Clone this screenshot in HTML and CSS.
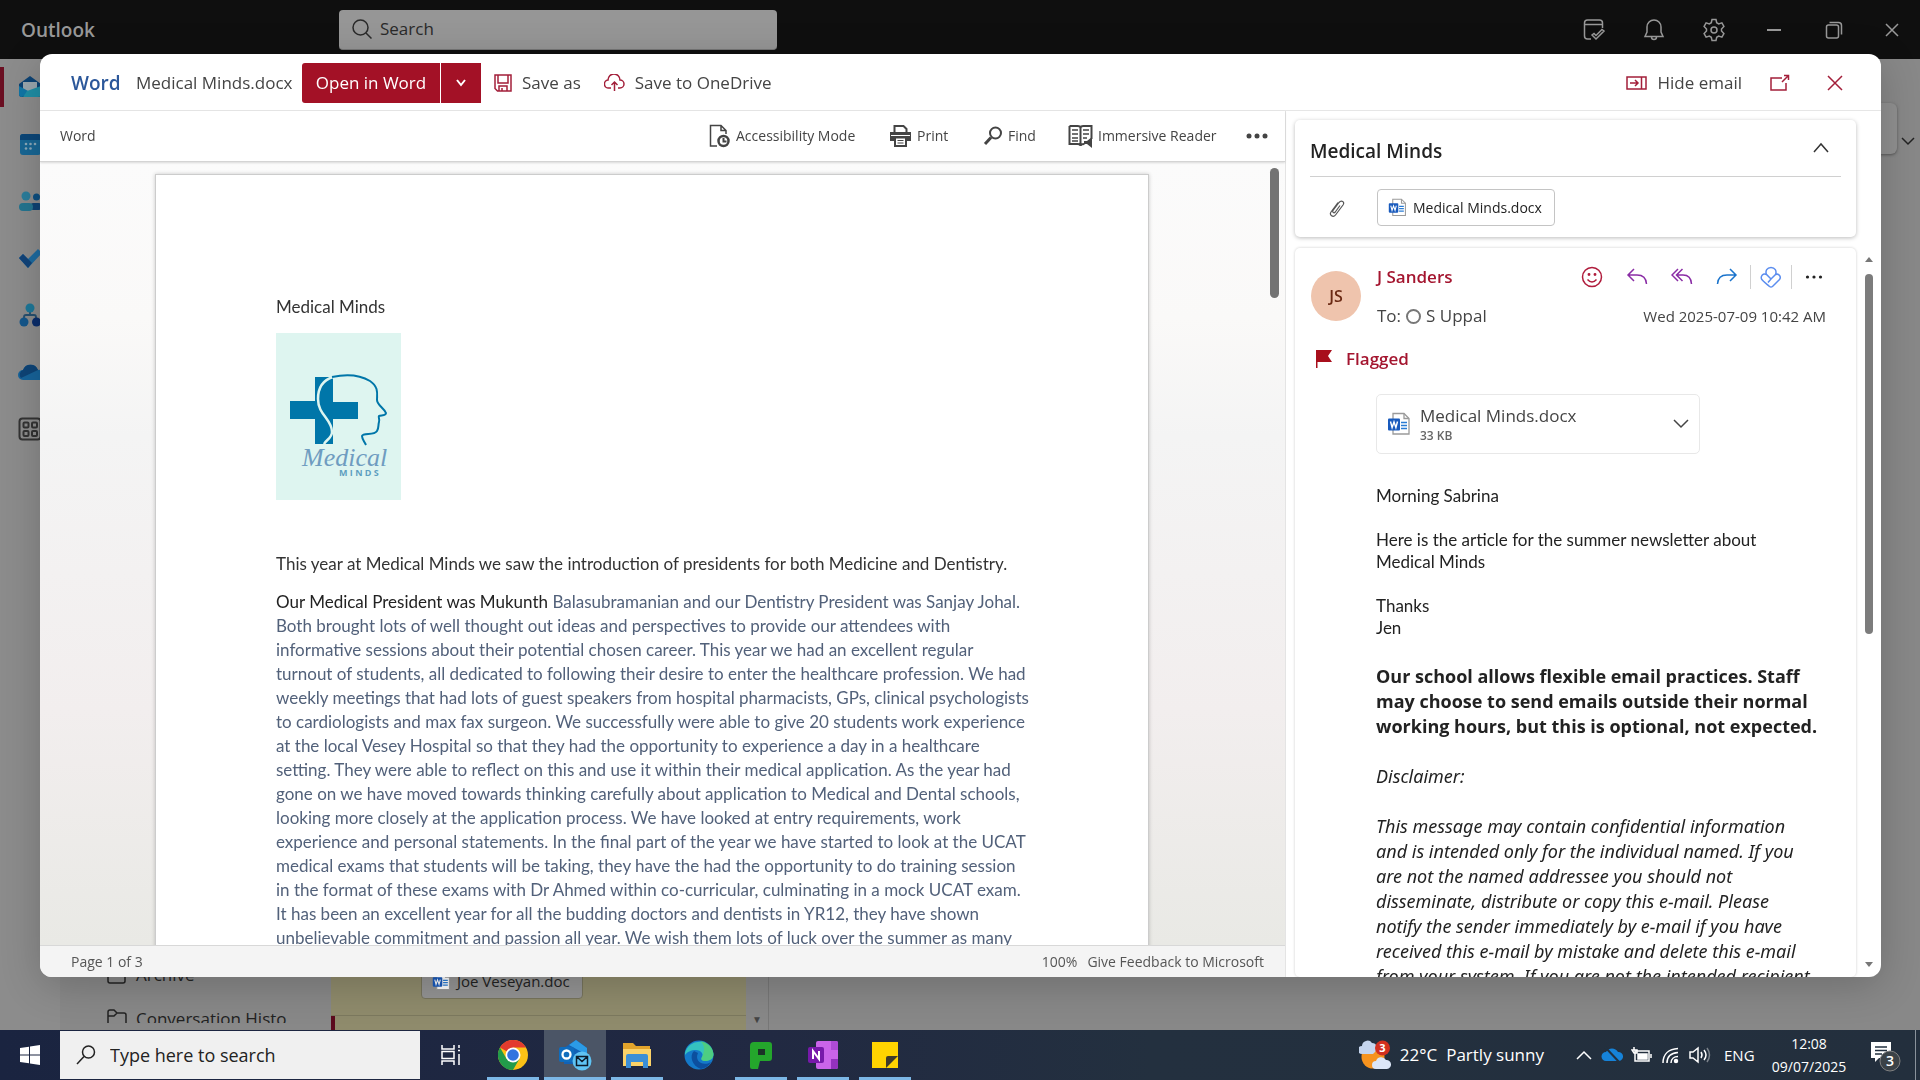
FILE: index.html
```html
<!DOCTYPE html>
<html lang="en">
<head>
<meta charset="utf-8">
<title>Outlook</title>
<link rel="stylesheet" href="styles.css">
</head>
<body>
<svg width="0" height="0" class="defs" aria-hidden="true">
  <symbol id="word-file" viewBox="0 0 24 24">
    <path d="M6 1.5h11l5 5v15.500H6z" fill="#fff" stroke="#9a9a9a" stroke-width="1.300"/>
    <path d="M17 1.500v5h5" fill="none" stroke="#9a9a9a" stroke-width="1.300"/>
    <path d="M14 10.500h6M14 13.500h6M14 16.500h6" stroke="#2b7cd3" stroke-width="1.500"/>
    <rect x="1" y="6.500" width="12" height="12" rx="1" fill="#185abd"/>
    <path d="M3.500 9.500l1.600 6 1.900-5.500 1.900 5.500 1.600-6" fill="none" stroke="#fff" stroke-width="1.400"/>
  </symbol>
</svg>

<header class="titlebar">
  <span class="app-name">Outlook</span>
  <label class="top-search">
    <svg class="ico" width="22" height="22" viewBox="0 0 22 22"><circle cx="9.500" cy="9.500" r="7.500"/><path d="M15 15l5.500 5.500"/></svg>
    <input type="text" placeholder="Search" aria-label="Search">
  </label>
  <nav class="window-tools">
    <button aria-label="My Day"><svg class="ico" width="24" height="24" viewBox="0 0 24 24"><path d="M9 21H5.500A3 3 0 0 1 2.500 18V5a3 3 0 0 1 3-3h12a3 3 0 0 1 3 3v5M2.500 6.500h18M10 17l4 4 8-8-2-1.500-6 6-2-2z"/></svg></button>
    <button aria-label="Notifications"><svg class="ico" width="24" height="24" viewBox="0 0 24 24"><path d="M12 2a7 7 0 0 0-7 7v5l-2 4.500h18L19 14V9a7 7 0 0 0-7-7zM9.500 19a2.500 2.500 0 0 0 5 0"/></svg></button>
    <button aria-label="Settings"><svg class="ico" width="24" height="24" viewBox="0 0 24 24"><circle cx="12" cy="12" r="3"/><path d="M10 1.500h4l.7 3.200 2 1.200 3.200-1 2 3.500L19.500 11v2l2.400 2.600-2 3.500-3.200-1-2 1.200-.7 3.200h-4l-.7-3.200-2-1.200-3.200 1-2-3.500L4.500 13v-2L2.100 8.400l2-3.500 3.200 1 2-1.200z"/></svg></button>
    <button aria-label="Minimize"><svg class="ico" width="18" height="18" viewBox="0 0 18 18"><path d="M2 9h14" stroke-width="2"/></svg></button>
    <button aria-label="Restore"><svg class="ico" width="18" height="18" viewBox="0 0 18 18"><rect x="1.500" y="4" width="12" height="13" rx="2"/><path d="M4.500 1.500h9a3 3 0 0 1 3 3v9"/></svg></button>
    <button aria-label="Close window"><svg class="ico" width="16" height="16" viewBox="0 0 16 16"><path d="M2 2l12 12M14 2L2 14"/></svg></button>
  </nav>
</header>

<main class="app">
  <nav class="rail">
    <button class="current" aria-label="Mail"><svg width="24" height="24" viewBox="0 0 24 24"><path d="M1 9l11-8 11 8v10a3 3 0 0 1-3 3H4a3 3 0 0 1-3-3z" fill="#0d4374"/><path d="M5 7h14v9H5z" fill="#9aa6ad"/><path d="M1 11l11 6-8 5a3 3 0 0 1-3-3z" fill="#1076a6"/><path d="M23 11v8a3 3 0 0 1-3 3H5l4-6z" fill="#1f8ea5"/></svg></button>
    <button aria-label="Calendar"><svg width="24" height="24" viewBox="0 0 24 24"><rect x="2" y="2" width="21" height="21" rx="3" fill="#186795"/><path d="M5 2h15a3 3 0 0 1 3 3v3H2V5a3 3 0 0 1 3-3z" fill="#0b4678"/><g fill="#8aa9ba"><circle cx="8" cy="12" r="1.300"/><circle cx="12.500" cy="12" r="1.300"/><circle cx="17" cy="12" r="1.300"/><circle cx="8" cy="16.500" r="1.300"/><circle cx="12.500" cy="16.500" r="1.300"/></g></svg></button>
    <button aria-label="People"><svg width="24" height="24" viewBox="0 0 24 24"><circle cx="8" cy="7" r="4.500" fill="#2a7d9b"/><circle cx="18.500" cy="8" r="3.500" fill="#0e4f80"/><rect x="12" y="14" width="12" height="7" rx="3.500" fill="#0e4374"/><rect x="1" y="14" width="14" height="8" rx="4" fill="#247590"/></svg></button>
    <button aria-label="To Do"><svg width="24" height="24" viewBox="0 0 24 24"><path d="M1 12l4-4 5 5L20 3l4 4-14 15z" fill="#1d6ba0"/><path d="M1 12l4-4 9 9-4 5z" fill="#114379"/></svg></button>
    <button aria-label="Org Explorer"><svg width="24" height="24" viewBox="0 0 24 24"><path d="M12 6v6M6 18v-4a2 2 0 0 1 2-2h8a2 2 0 0 1 2 2v4" fill="none" stroke="#27506f" stroke-width="1.800"/><circle cx="12" cy="5" r="4.500" fill="#1d7798"/><circle cx="6" cy="19" r="4.500" fill="#14578b"/><circle cx="18.500" cy="19" r="4.500" fill="#0a2d6b"/></svg></button>
    <button aria-label="OneDrive"><svg width="24" height="24" viewBox="0 0 24 24"><path d="M5 20a5 5 0 0 1 0-10 8 8 0 0 1 15 0 5 5 0 0 1 3 10z" fill="#17649b"/><path d="M5 10a8 8 0 0 1 15 0L3 18a5 5 0 0 1 2-8z" fill="#0e4477"/></svg></button>
    <button aria-label="More apps"><svg class="ico apps" width="24" height="24" viewBox="0 0 24 24"><rect x="1.500" y="1.500" width="21" height="21" rx="3"/><rect x="5.500" y="5.500" width="5" height="5" rx="1"/><rect x="14" y="5.500" width="5" height="5" rx="1"/><rect x="5.500" y="14" width="5" height="5" rx="1"/><rect x="14" y="14" width="5" height="5" rx="1"/></svg></button>
  </nav>
  <section class="folders">
    <div class="folder"><svg class="ico" width="22" height="20" viewBox="0 0 22 20"><path d="M2 5v11a2 2 0 0 0 2 2h13a2 2 0 0 0 2-2V5M1 2h19v3H1z"/></svg>Archive</div>
    <div class="folder"><svg class="ico" width="22" height="20" viewBox="0 0 22 20"><path d="M2 18V4a2 2 0 0 1 2-2h4l3 3h7a2 2 0 0 1 2 2v11zM2 8h6l3-3"/></svg>Conversation Histo</div>
  </section>
  <section class="messages">
    <div class="message"><span class="doc-chip"><svg width="19" height="19"><use href="#word-file"/></svg>Joe Veseyan.doc</span></div>
    <div class="message next"></div>
  </section>
  <div class="list-scroll">▼</div>
  <section class="reading">
    <div class="ribbon-end"></div>
    <svg class="ico" width="14" height="10" viewBox="0 0 14 10"><path d="M1 2l6 6 6-6"/></svg>
  </section>
</main>

<footer class="taskbar">
  <button class="start" aria-label="Start"><svg width="20" height="20" viewBox="0 0 20 20" fill="#fff"><path d="M0 3l9-1.300V9.500H0zM10 1.500L20 0v9.500H10zM0 10.500h9v7.800L0 17zM10 10.500h10V20l-10-1.500z"/></svg></button>
  <label class="task-search">
    <svg class="ico" width="20" height="20" viewBox="0 0 20 20"><circle cx="12.500" cy="7" r="6"/><path d="M8 11.500L1 19"/></svg>
    <input type="text" placeholder="Type here to search" aria-label="Type here to search">
  </label>
  <button class="task" aria-label="Task View"><svg class="ico" width="22" height="22" viewBox="0 0 22 22"><path d="M2 1v4h12V1M2 21v-4h12v4M2 7.500h12v7H2zM19 1v3M19 10v11M18 6.500h2" stroke-width="1.500"/></svg></button>
  <button class="task open" aria-label="Chrome"><svg width="30" height="30" viewBox="0 0 30 30"><circle cx="15" cy="15" r="15" fill="#fbc116"/><path d="M15 15L2 7.500A15 15 0 0 1 28 7.500H15z" fill="#e33b2e"/><path d="M2 7.500A15 15 0 0 0 15 30l6.500-11.200L15 15 8.500 18.800z" fill="#229b4a"/><circle cx="15" cy="15" r="7.500" fill="#fff"/><circle cx="15" cy="15" r="5.800" fill="#3274df"/></svg></button>
  <button class="task open active" aria-label="Outlook"><svg width="34" height="32" viewBox="0 0 34 32"><path d="M6 9L18 1l11 8v16H6z" fill="#1261b5"/><path d="M11 6l7-5 11 8v7z" fill="#2b9be6"/><rect x="1" y="8" width="15" height="15" rx="2" fill="#0f6cbd"/><circle cx="8.500" cy="15.500" r="4" fill="none" stroke="#fff" stroke-width="2.300"/><circle cx="24" cy="22" r="9.500" fill="#5fc3f3"/><path d="M18.500 17.500h11v9h-11zl5.500 5 5.500-5" fill="none" stroke="#0d1c2b" stroke-width="1.500"/></svg></button>
  <button class="task open" aria-label="File Explorer"><svg width="30" height="28" viewBox="0 0 30 28"><path d="M1 2h10l3 3h14v5H1z" fill="#e2a42b"/><path d="M1 8h28v17H1z" fill="#fbd268"/><path d="M4 27V15a2 2 0 0 1 2-2h18a2 2 0 0 1 2 2v12h-5v-6H9v6z" fill="#3c8fd6"/></svg></button>
  <button class="task" aria-label="Edge"><svg width="30" height="30" viewBox="0 0 30 30"><circle cx="15" cy="15" r="14.500" fill="#1479c9"/><path d="M1 13A14.500 14.500 0 0 1 29.500 14c0 5-4 7-8 7s-5-2-3.500-4c2-3-1-7-6-7-5 0-9 2-11 5z" fill="#35c3c0"/><path d="M16 1a14.500 14.500 0 0 1 13.500 13c0 5-4 7-8 7s-5-2-3.500-4c2-4 4-12-2-16z" fill="#5ad45f" opacity=".65"/><path d="M10 11c-5 5-2 15 7 18a14.500 14.500 0 0 0 10-7c-8 5-17-1-13-9z" fill="#0c4f9e"/></svg></button>
  <button class="task open" aria-label="PaperCut"><svg width="24" height="28" viewBox="0 0 24 28"><path d="M5 1h15a3 3 0 0 1 3 3v13a3 3 0 0 1-3 3h-9l-2 8H3a2 2 0 0 1-2-2V5a4 4 0 0 1 4-4z" fill="#24a62c"/><rect x="9" y="8" width="7" height="6" fill="#1b3327"/></svg></button>
  <button class="task open" aria-label="OneNote"><svg width="30" height="28" viewBox="0 0 30 28"><rect x="8" y="0" width="22" height="28" rx="2" fill="#ca64ea"/><path d="M23 0h5a2 2 0 0 1 2 2v7h-7z" fill="#ae4bd5"/><path d="M23 18h7v8a2 2 0 0 1-2 2h-5z" fill="#9332bf"/><rect x="0" y="6" width="16" height="16" rx="2" fill="#7719aa"/><path d="M5 18v-8l6 8v-8" fill="none" stroke="#fff" stroke-width="2"/></svg></button>
  <button class="task open" aria-label="Sticky Notes"><svg width="28" height="28" viewBox="0 0 28 28"><path d="M1 1h26v26H1z" fill="#ffd400"/><path d="M15 27V17a2 2 0 0 1 2-2h10z" fill="#3e3a2a"/></svg></button>
  <div class="tray">
    <button class="weather"><svg width="32" height="30" viewBox="0 0 32 30"><circle cx="14" cy="17" r="11.500" fill="#f6931e"/><path d="M3 14a4 4 0 0 1 0-8 5.500 5.500 0 0 1 10-3 5 5 0 0 1 3 9l-2 2z" fill="#c5d5ee"/><path d="M17 29a4 4 0 0 1 0-8 5.500 5.500 0 0 1 10-1 4.500 4.500 0 0 1 1 9z" fill="#dce6f7"/><circle cx="23.500" cy="8" r="7.500" fill="#d2301f"/><text x="23.500" y="12" text-anchor="middle" font-size="11" font-weight="700" fill="#fff">3</text></svg><span>22°C</span><span>Partly sunny</span></button>
    <button aria-label="Show hidden icons"><svg class="ico" width="18" height="12" viewBox="0 0 18 12"><path d="M2 10l7-7 7 7"/></svg></button>
    <button aria-label="OneDrive status"><svg width="22" height="18" viewBox="0 0 22 18"><path d="M5 15a4.500 4.500 0 0 1 0-9 7 7 0 0 1 12 0 4.500 4.500 0 0 1 1 9z" fill="#1683d9"/><path d="M4 1l15 16" stroke="#22303f" stroke-width="2"/></svg></button>
    <button aria-label="Battery"><svg class="ico" width="22" height="18" viewBox="0 0 22 18"><rect x="4" y="5" width="14" height="10"/><path d="M7 8h9v5H7z" fill="#fff"/><path d="M20 8v4M3 1v3M1 4h5v3H3z"/></svg></button>
    <button aria-label="Network"><svg class="ico" width="20" height="18" viewBox="0 0 20 18"><path d="M2 17C2 8 8 3 17 2.500M6 17C6 11 10 7 17 6.500M10 17c0-4 3-6.500 7-6.500"/><circle cx="15" cy="15" r="1.500" fill="#fff"/></svg></button>
    <button aria-label="Volume"><svg class="ico" width="22" height="18" viewBox="0 0 22 18"><path d="M1 6h3l5-4v14l-5-4H1zM12 6q2 3 0 6M15 4q4 5 0 10"/><path d="M18 2q5 7 0 14" opacity=".4"/></svg></button>
    <span class="lang">ENG</span>
    <time class="clock"><span>12:08</span><span>09/07/2025</span></time>
    <button class="notice" aria-label="Notifications, 3 new"><svg width="34" height="34" viewBox="0 0 34 34"><path d="M2 4h20v16H10l-4 4v-4H2z" fill="#fff"/><path d="M6 9h12M6 12.500h12M6 16h7" stroke="#22303f" stroke-width="1.500"/><circle cx="21" cy="23" r="10" fill="#3b4247" stroke="#808080"/><text x="21" y="28" text-anchor="middle" font-size="14" font-weight="600" fill="#fff">3</text></svg></button>
  </div>
</footer>

<section class="modal" role="dialog" aria-label="Medical Minds.docx preview">
  <header class="modal-head">
    <strong class="brand">Word</strong>
    <span class="filename">Medical Minds.docx</span>
    <button class="primary">Open in Word</button>
    <button class="primary split" aria-label="More open options"><svg class="ico" width="12" height="10" viewBox="0 0 12 10"><path d="M2 2l4 5 4-5" stroke-width="2"/></svg></button>
    <button class="act save"><svg class="ico" width="18" height="18" viewBox="0 0 18 18"><path d="M1 1h16v16H3.500L1 14.500zM4 1v8h10V1M5 17v-5h8v5M8 14v3"/></svg>Save as</button>
    <button class="act"><svg class="ico" width="21" height="18" viewBox="0 0 21 18"><path d="M7 14H5a4 4 0 0 1-1-8 6 6 0 0 1 12 0 4 4 0 0 1 0 8h-2M10.500 17V8M7.500 11l3-3 3 3"/></svg>Save to OneDrive</button>
    <div class="head-end">
      <button class="act"><svg class="ico" width="21" height="16" viewBox="0 0 21 16"><path d="M1 2h19v12H1zM15.500 2v12M4 8h8M9 5l3 3-3 3"/></svg>Hide email</button>
      <button class="act" aria-label="Pop out"><svg class="ico" width="20" height="18" viewBox="0 0 20 18"><path d="M12 4H1v12h15V9M12 8l6-6M14 1.500h4.500v4.500"/></svg></button>
      <button class="act" aria-label="Close"><svg class="ico" width="18" height="18" viewBox="0 0 18 18"><path d="M2 2l14 14M16 2L2 16"/></svg></button>
    </div>
  </header>
  <div class="modal-body">
    <section class="viewer">
      <nav class="viewer-bar">
        <span class="viewer-name">Word</span>
        <button class="b-access"><svg class="ico" width="22" height="24" viewBox="0 0 22 24"><path d="M8 22H1.500V1.500H12l5 5V10M12 1.500v5h5"/><circle cx="14.500" cy="17" r="5" stroke-width="2.500"/><path d="M14.500 14v3.500h3" stroke-width="2"/></svg>Accessibility Mode</button>
        <button class="b-print"><svg width="23" height="22" viewBox="0 0 23 22"><path d="M1 7h21v9H1z" fill="#444"/><path d="M5.500 8V1h9l3 3v4z" fill="#fff" stroke="#444" stroke-width="2"/><path d="M2 10.500h19" stroke="#fff" stroke-width="1"/><path d="M6 12.500h11V21H6z" fill="#fff" stroke="#444" stroke-width="2"/><path d="M8.500 15.500h6M8.500 18h6" stroke="#444"/></svg>Print</button>
        <button class="b-find"><svg class="ico" width="20" height="20" viewBox="0 0 20 20"><circle cx="12.500" cy="7" r="5.500" stroke-width="2"/><path d="M8 11.500L2 18" stroke-width="3"/></svg>Find</button>
        <button class="b-reader"><svg class="ico" width="25" height="24" viewBox="0 0 25 24"><path d="M1.500 2h8q3 0 3 2 0-2 3-2h8v13M12.500 4v17M1.500 2v18h8q3 0 3 2 0-2 4-2" stroke-width="2"/><path d="M4 6h6M4 10h6M4 14h6M15 6h6M15 10h6M15 14h4M4 17h6"/><path d="M16 17h3l5-4v11l-5-4h-3z" fill="#444" stroke="none"/></svg>Immersive Reader</button>
        <button aria-label="More"><svg width="22" height="6" viewBox="0 0 22 6" fill="#444"><circle cx="3" cy="3" r="2.500"/><circle cx="11" cy="3" r="2.500"/><circle cx="19" cy="3" r="2.500"/></svg></button>
      </nav>
      <div class="canvas">
        <article class="page">
          <p class="doc-title">Medical Minds</p>
          <svg class="logo" width="125" height="167" viewBox="0 0 125 167">
            <rect width="125" height="167" fill="#def5f0"/>
            <path d="M39 44h18v25h25v17H57v25H39V86H14V68h25z" fill="#0076a9"/>
            <path d="M57 44C44 48 42 58 42 66c0 16 14 20 14 33 0 6-6 8-8 12" fill="none" stroke="#def5f0" stroke-width="2.500"/>
            <path d="M56 44c14-3 28-2 38 4 9 6 7 13 7 19 0 5 7 8 9 13 0 3-5 2-7 3-1 1 1 3 0 6-1 3 0 6-2 9-3 5-14 1-15 5 0 3 2 5 4 9" fill="none" stroke="#0076a9" stroke-width="2"/>
            <text x="26" y="133" class="logo-script">Medical</text>
            <text x="63" y="143" class="logo-caps">M I N D S</text>
          </svg>
          <p class="intro">This year at Medical Minds we saw the introduction of presidents for both Medicine and Dentistry.</p>
          <p class="story"><span class="ink">Our Medical President was Mukunth</span> Balasubramanian and our Dentistry President was Sanjay Johal.<br>
          Both brought lots of well thought out ideas and perspectives to provide our attendees with<br>
          informative sessions about their potential chosen career. This year we had an excellent regular<br>
          turnout of students, all dedicated to following their desire to enter the healthcare profession. We had<br>
          weekly meetings that had lots of guest speakers from hospital pharmacists, GPs, clinical psychologists<br>
          to cardiologists and max fax surgeon. We successfully were able to give 20 students work experience<br>
          at the local Vesey Hospital so that they had the opportunity to experience a day in a healthcare<br>
          setting. They were able to reflect on this and use it within their medical application. As the year had<br>
          gone on we have moved towards thinking carefully about application to Medical and Dental schools,<br>
          looking more closely at the application process. We have looked at entry requirements, work<br>
          experience and personal statements. In the final part of the year we have started to look at the UCAT<br>
          medical exams that students will be taking, they have the had the opportunity to do training session<br>
          in the format of these exams with Dr Ahmed within co-curricular, culminating in a mock UCAT exam.<br>
          It has been an excellent year for all the budding doctors and dentists in YR12, they have shown<br>
          unbelievable commitment and passion all year. We wish them lots of luck over the summer as many</p>
        </article>
        <div class="thumb"></div>
      </div>
      <footer class="viewer-foot"><span>Page 1 of 3</span><span class="zoom">100%</span><a href="#">Give Feedback to Microsoft</a></footer>
    </section>
    <aside class="mail">
      <section class="card subject">
        <div class="subject-row"><h1>Medical Minds</h1><button aria-label="Collapse"><svg class="ico" width="18" height="12" viewBox="0 0 18 12"><path d="M2 10l7-8 7 8"/></svg></button></div>
        <div class="clip-row"><svg class="ico" width="18" height="20" viewBox="0 0 18 20"><path d="M5 12.500l6-8c2.500-3 6-.5 4 2.500L7.500 17c-2.500 3.200-6.500 0-4.500-3L10 4.500M5 12.500c-1 2 1 3 2.300 1.500L12 7.500" stroke-width="1.200"/></svg><button class="doc-chip"><svg width="19" height="19"><use href="#word-file"/></svg>Medical Minds.docx</button></div>
      </section>
      <div class="mail-scroll">
        <section class="card message-card">
          <div class="sender-row">
            <div class="avatar">JS</div>
            <div class="sender">
              <div class="line"><span class="from">J Sanders</span>
                <div class="mail-tools">
                  <button aria-label="React" class="c-red"><svg class="ico" width="22" height="22" viewBox="0 0 22 22"><circle cx="11" cy="11" r="9.500"/><path d="M6.500 13.500q4.500 5 9 0"/><circle cx="8" cy="8.500" r=".7"/><circle cx="14" cy="8.500" r=".7"/></svg></button>
                  <button aria-label="Reply" class="c-purple"><svg class="ico" width="22" height="22" viewBox="0 0 22 22"><path d="M8 3L2 9l6 6M2 9h9q9 0 9.500 9"/></svg></button>
                  <button aria-label="Reply all" class="c-purple"><svg class="ico" width="22" height="22" viewBox="0 0 22 22"><path d="M7 3L1 9l6 6M11.500 3l-6 6 6 6M6 9h6q8 0 8.500 9"/></svg></button>
                  <button aria-label="Forward" class="c-blue"><svg class="ico" width="22" height="22" viewBox="0 0 22 22"><path d="M14 3l6 6-6 6M20 9h-9q-9 0-9.500 9"/></svg></button>
                  <button aria-label="Apps" class="c-sky ruled"><svg class="ico" width="22" height="22" viewBox="0 0 22 22"><path d="M6.500 8.500C5 5 7 1.500 11 1.500s6 3.500 4.500 7L11 13 6.500 8.500C3 7 .5 10 1.500 13c.3 1 1 1.500 8 7.500.8.600 2.200.6 3 0l7-7c2-2.500-.5-6.500-4-5M11 13l-3 3.500"/></svg></button>
                  <button aria-label="More actions"><svg width="18" height="4" viewBox="0 0 18 4" fill="#222"><circle cx="2.500" cy="2" r="1.600"/><circle cx="9" cy="2" r="1.600"/><circle cx="15.500" cy="2" r="1.600"/></svg></button>
                </div>
              </div>
              <div class="line to"><span>To:</span><i class="presence"></i><span>S Uppal</span><time>Wed 2025-07-09 10:42 AM</time></div>
            </div>
          </div>
          <div class="flagged"><svg width="18" height="20" viewBox="0 0 18 20"><path d="M1 1h16l-4 6 4 6H2.500v6H1z" fill="#a80f1c"/></svg>Flagged</div>
          <div class="letter">
            <button class="attachment"><svg width="24" height="24"><use href="#word-file"/></svg><span class="att-text"><span>Medical Minds.docx</span><small>33 KB</small></span><svg class="ico" width="16" height="12" viewBox="0 0 16 12"><path d="M1 2l7 7 7-7"/></svg></button>
            <p class="note">Morning Sabrina<br><br>Here is the article for the summer newsletter about<br>Medical Minds<br><br>Thanks<br>Jen</p>
            <p class="policy">Our school allows flexible email practices. Staff<br>may choose to send emails outside their normal<br>working hours, but this is optional, not expected.</p>
            <p class="legal">Disclaimer:<br><br>This message may contain confidential information<br>and is intended only for the individual named. If you<br>are not the named addressee you should not<br>disseminate, distribute or copy this e-mail. Please<br>notify the sender immediately by e-mail if you have<br>received this e-mail by mistake and delete this e-mail<br>from your system. If you are not the intended recipient</p>
          </div>
        </section>
        <div class="track"><i class="up"></i><i class="bar"></i><i class="down"></i></div>
      </div>
    </aside>
  </div>
</section>
</body>
</html>
```
FILE: styles.css
```css
* { box-sizing: border-box; }
body {
  margin: 0;
  height: 100vh;
  display: flex;
  flex-direction: column;
  overflow: hidden;
  font: 17px/22px "Open Sans", "Noto Sans", sans-serif;
  color: #333;
  background: #888;
}
button {
  display: flex;
  align-items: center;
  justify-content: center;
  padding: 0;
  border: 0;
  background: none;
  color: inherit;
  font: inherit;
  white-space: nowrap;
}
input {
  flex: 1;
  min-width: 0;
  padding: 0;
  border: 0;
  outline: 0;
  background: none;
  font: inherit;
  color: inherit;
}
input::placeholder { color: inherit; opacity: 1; }
p, h1 { margin: 0; }
svg { flex: none; display: block; }
.defs { position: absolute; }
.ico { fill: none; stroke: currentColor; stroke-width: 1.5; }

/* title bar */
.titlebar {
  flex: none;
  height: 59px;
  display: flex;
  align-items: center;
  background: #0f0f0f;
  color: #999;
}
.app-name { width: 339px; padding-left: 21px; font-size: 19px; font-weight: 600; }
.top-search {
  width: 438px;
  height: 40px;
  display: flex;
  align-items: center;
  gap: 7px;
  padding: 0 12px;
  border-radius: 4px;
  background: #969696;
  color: #2a2a2a;
  border-bottom: 1px solid #777;
}
.window-tools { margin-left: auto; display: flex; }
.window-tools button { width: 60px; height: 40px; }
.window-tools button:last-child { width: 56px; }

/* mailbox behind the preview */
.app {
  flex: 1;
  min-height: 0;
  display: grid;
  grid-template-columns: 60px 271px 415px 23px 1fr;
  color: #222;
}
.rail { display: flex; flex-direction: column; background: #8c8c8c; padding-top: 8px; gap: 17px; }
.rail button { height: 40px; border-left: 4px solid transparent; padding-right: 4px; }
.rail .current { border-color: #6b0f22; }
.rail .apps { color: #333; stroke-width: 2; }
.folders { display: flex; flex-direction: column; justify-content: flex-end; padding-bottom: 7px; }
.folder { height: 44px; display: flex; align-items: center; gap: 8px; padding-left: 46px; flex: none; white-space: nowrap; }
.folder:last-child { height: 15px; overflow: hidden; align-items: flex-start; margin-top: 11px; }
.messages { display: flex; flex-direction: column; background: #8f8b6c; }
.message { flex: 1; display: flex; align-items: flex-end; padding: 0 90px 16px; border-bottom: 1px solid #7c795f; }
.message .doc-chip { height: 36px; border-color: #77745c; background: #949494; font-size: 15px; }
.message.next { flex: none; height: 14px; padding: 0; border: 0; border-left: 4px solid #5c0a1d; }
.list-scroll { display: flex; align-items: flex-end; justify-content: center; font-size: 10px; color: #444; border-right: 1px solid #777; }
.reading { display: flex; justify-content: flex-end; gap: 4px; padding: 44px 5px 0 0; }
.ribbon-end { width: 60px; height: 51px; border-radius: 6px; background: #909090; box-shadow: 0 1px 3px #555; }
.reading .ico { margin-top: 33px; }

/* taskbar */
.taskbar {
  flex: none;
  height: 50px;
  display: flex;
  align-items: stretch;
  color: #fff;
  background: linear-gradient(90deg, #1a2440, #212942 40%, #23303f 60%, #232f3d);
}
.start { width: 60px; }
.task-search {
  width: 360px;
  margin: 1px 0;
  display: flex;
  align-items: center;
  gap: 14px;
  padding-left: 16px;
  background: #f0f0f0;
  color: #222;
  font-size: 18px;
}
.task { width: 62px; border-top: 3px solid transparent; border-bottom: 3px solid transparent; }
.open { background: linear-gradient(#7cb7e6, #7cb7e6) center bottom / 52px 3px no-repeat border-box; }
.active { background: linear-gradient(#7cb7e6, #7cb7e6) center bottom / 62px 3px no-repeat border-box, #4b5566; }
.tray { margin-left: auto; display: flex; align-items: center; padding-right: 4px; }
.weather { gap: 9px; margin-right: 31px; }
.tray > button:not(.weather):not(.notice) { margin-right: 8px; }
.lang { width: 44px; padding-left: 5px; font-size: 15px; }
.clock { width: 92px; display: flex; flex-direction: column; align-items: center; font-size: 14px; line-height: 23px; margin-right: 14px; }
.notice { height: 50px; border-right: 1px solid #8a929b; width: 47px; justify-content: flex-start; }

/* preview window */
.modal {
  position: fixed;
  inset: 54px 39px 103px 40px;
  display: flex;
  flex-direction: column;
  overflow: hidden;
  border-radius: 12px;
  background: #fff;
  box-shadow: 0 8px 40px #0003;
}
.modal-head {
  flex: none;
  height: 57px;
  display: flex;
  align-items: center;
  padding: 2px 37px 0 31px;
  border-bottom: 1px solid #e6e6e6;
  color: #444;
}
.brand { width: 65px; font-size: 19px; font-weight: 600; color: #2b579a; }
.filename { width: 166px; white-space: nowrap; }
.primary { width: 138px; height: 40px; border-radius: 3px 0 0 3px; background: #a31126; color: #fff; }
.split { width: 40px; margin-left: 1px; border-radius: 0; }
.act { gap: 10px; }
.act .ico { color: #a31f3a; }
.save { margin: 0 23px 0 13px; }
.head-end { margin-left: auto; display: flex; gap: 28px; }
.head-end .act:last-child { margin-left: 8px; }
.modal-body { flex: 1; min-height: 0; display: grid; grid-template-columns: minmax(0, 1246px) minmax(0, 1fr); }
.viewer { display: flex; flex-direction: column; min-height: 0; border-right: 1px solid #e4e4e4; }
.viewer-bar {
  flex: none;
  height: 51px;
  display: flex;
  align-items: center;
  padding: 0 17px 0 20px;
  border-bottom: 1px solid #d4d4d4;
  box-shadow: 0 1px 2px #0002;
  font-size: 14px;
  color: #444;
  z-index: 1;
}
.viewer-name { margin-right: auto; }
.viewer-bar button { gap: 5px; justify-content: flex-start; }
.b-access { width: 180px; }
.b-print { width: 94px; }
.b-find { width: 85px; }
.b-reader { width: 178px; }
.canvas {
  flex: 1;
  min-height: 0;
  overflow: hidden;
  display: flex;
  align-items: flex-start;
  padding: 12px 6px 0 115px;
  background: linear-gradient(#fbfbfb, #faf9f8 20%, #f4f4f4 35%, #f2eeee 70%, #e9e9e5);
}
.page {
  flex: 0 1 994px;
  padding: 120px 0 0 120px;
  border: 1px solid #ccc;
  background: #fff;
  box-shadow: 0 0 4px #0003;
  font: 17px/24px Lato, sans-serif;
  color: #333;
  white-space: nowrap;
}
.thumb { width: 9px; height: 130px; margin: -6px 0 0 auto; border-radius: 5px; background: #737373; }
.doc-title { padding-bottom: 14px; }
.logo-script { font: italic 400 26px "Liberation Serif", serif; fill: #6f9cc0; }
.logo-caps { font: 700 9px "Open Sans", sans-serif; fill: #5f9fc0; }
.intro { margin-top: 52px; }
.story { margin-top: 14px; color: #52617a; }
.ink { color: #222; }
.viewer-foot {
  flex: none;
  height: 32px;
  display: flex;
  align-items: center;
  gap: 10px;
  padding: 0 21px 0 31px;
  border-top: 1px solid #d8d8d8;
  background: #f4f4f4;
  font-size: 14px;
  color: #555;
}
.viewer-foot a { color: inherit; text-decoration: none; }
.zoom { margin-left: auto; }

/* message pane */
.mail { display: flex; flex-direction: column; gap: 11px; min-height: 0; padding: 9px 0 0 9px; }
.card { background: #fff; border-radius: 5px; box-shadow: 0 0 4px #0003; }
.subject { flex: none; height: 117px; margin-right: 25px; padding: 0 15px; box-shadow: 0 1px 4px #0004; }
.subject-row { height: 57px; display: flex; align-items: center; justify-content: space-between; padding-top: 5px; border-bottom: 1px solid #d0d0d0; }
h1 { font-size: 19px; font-weight: 600; color: #222; }
.subject-row button { margin: 0 11px 6px 0; }
.clip-row { display: flex; align-items: center; gap: 31px; padding: 12px 18px 0; color: #555; }
.doc-chip {
  display: flex;
  align-items: center;
  gap: 6px;
  height: 37px;
  padding: 0 12px 0 10px;
  border: 1px solid #c4c4c4;
  border-radius: 4px;
  color: #222;
  font-size: 14px;
  white-space: nowrap;
}
.mail-scroll { flex: 1; min-height: 0; display: flex; }
.message-card { flex: 1; min-width: 0; padding: 18px 30px 0 16px; overflow: hidden; white-space: nowrap; box-shadow: 0 0 3px #0003; }
.sender-row { display: flex; gap: 16px; }
.avatar { width: 50px; height: 50px; margin-top: 5px; border-radius: 50%; background: #efc4ad; color: #6b2a14; font-size: 16px; font-weight: 600; line-height: 50px; text-align: center; }
.sender { flex: 1; }
.line { height: 22px; display: flex; align-items: center; }
.from { color: #a4152f; font-weight: 600; }
.to { margin-top: 17px; gap: 5px; color: #444; }
.to time { margin-left: auto; font-size: 15px; }
.presence { width: 15px; height: 15px; border: 2px solid #777; border-radius: 50%; }
.mail-tools { margin-left: auto; display: flex; gap: 23px; align-items: center; margin-right: 3px; }
.c-red { color: #b01d3d; }
.c-purple { color: #8a2da5; }
.c-blue { color: #1b74cc; }
.c-sky { color: #5b8def; }
.ruled { border: solid #d0d0d0; border-width: 0 1px; padding: 0 9px; margin: 0 -10px 0 -11px; height: 24px; }
.flagged { display: flex; align-items: center; gap: 13px; margin: 21px 0 0 4px; color: #a4152f; font-weight: 600; }
.letter { padding: 24px 0 0 65px; color: #222; }
.attachment {
  width: 324px;
  height: 60px;
  padding: 0 10px;
  gap: 9px;
  border: 1px solid #e8e8e8;
  border-radius: 5px;
  color: #444;
}
.att-text { flex: 1; display: flex; flex-direction: column; align-items: flex-start; padding-top: 2px; }
.att-text small { font-size: 12px; line-height: 18px; font-weight: 600; color: #666; }
.note { margin-top: 31px; font-family: Lato, sans-serif; }
.policy { margin-top: 25px; font-size: 18px; line-height: 25px; font-weight: 700; }
.legal { margin-top: 25px; font-family: "Noto Sans", sans-serif; font-size: 18px; line-height: 25px; font-style: italic; }
.track { width: 25px; display: flex; flex-direction: column; align-items: center; padding: 9px 0 10px; }
.track i { width: 8px; }
.bar { height: 360px; margin-top: 12px; border-radius: 4px; background: #7c7c7c; }
.up, .down { border: 4px solid transparent; }
.up { border-top: 0; border-bottom: 5px solid #777; }
.down { border-bottom: 0; border-top: 5px solid #777; margin-top: auto; }
```
